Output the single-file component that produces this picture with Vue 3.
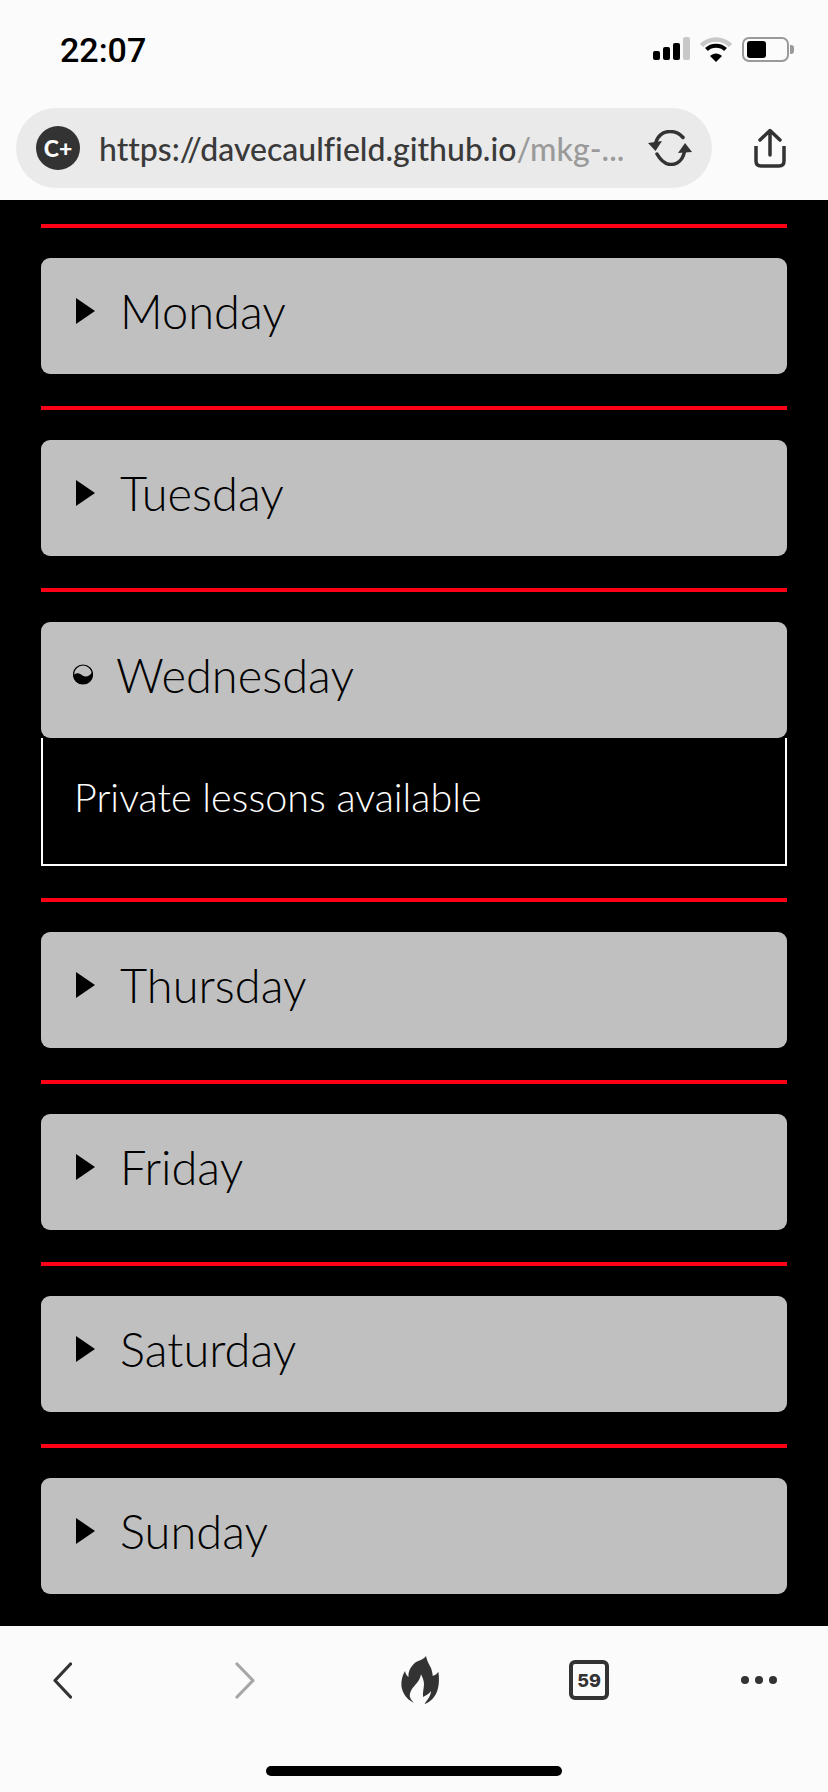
<script setup>
import { ref } from 'vue'

const days = ['Monday', 'Tuesday', 'Wednesday', 'Thursday', 'Friday', 'Saturday', 'Sunday']
const openDay = ref('Wednesday')

const toggle = (day) => {
  openDay.value = openDay.value === day ? '' : day
}
</script>

<template>
  <div class="page">
    <div class="status">
      <span class="time">22:07</span>
      <div class="status-icons">
        <div class="signal">
          <i class="b1"></i><i class="b2"></i><i class="b3"></i><i class="b4"></i>
        </div>
        <svg class="wifi" width="32" height="25" viewBox="0 0 32 25">
          <path d="M1.5 8.5C9.5 .5 22.5 .5 30.5 8.5" fill="none" stroke="#c8c8c8" stroke-width="4.5" />
          <path d="M6.5 12.5C11.5 7.5 20.5 7.5 25.5 12.5" fill="none" stroke="#000" stroke-width="4" />
          <path d="M16 25L10 19C13.5 15.5 18.5 15.5 22 19Z" fill="#000" />
        </svg>
        <div class="battery"><div class="battery-fill"></div></div>
        <div class="battery-cap"></div>
      </div>
    </div>

    <div class="toolbar">
      <div class="url-pill">
        <span class="site-badge">C+</span>
        <span class="url"><span class="url-host">https://davecaulfield.github.io</span><span class="url-path">/mkg-...</span></span>
        <svg class="sync" width="44" height="36" viewBox="0 0 44 36">
          <path d="M7 17C8 6 15 1.5 22 1.5C28 1.5 32 4 35 7.500" fill="none" stroke="#333" stroke-width="3.500" stroke-linecap="round" />
          <path d="M9 24C13 31 17 34.500 23 34.500C31 34.500 36 28 37 18" fill="none" stroke="#333" stroke-width="3.500" stroke-linecap="round" />
          <path d="M0 13L14 11L7.500 21Z" fill="#333" />
          <path d="M30 23L37 13L44 22Z" fill="#333" />
        </svg>
      </div>
      <svg class="share" width="32" height="40" viewBox="0 0 32 40">
        <path d="M2 18V33Q2 38 7 38H25Q30 38 30 33V18" fill="none" stroke="#333" stroke-width="3.500" />
        <path d="M16 27V3M6 12L16 2.500L26 12" fill="none" stroke="#333" stroke-width="3.500" stroke-linecap="round" stroke-linejoin="round" />
      </svg>
    </div>

    <main class="schedule">
      <section v-for="day in days" :key="day" class="day">
        <hr class="rule" />
        <div class="day-head" @click="toggle(day)">
          <svg v-if="openDay === day" class="marker-open" width="20" height="21" viewBox="0 0 20 21">
            <circle cx="10" cy="10.500" r="9.500" fill="#c0c0c0" stroke="#000" stroke-width="1.200" />
            <path d="M.5 11C4 8 7 9 9.500 11.500C13 14 17 12 19.500 7.500C20.800 15 16 20 10 20C4.500 20 .5 16 .5 11Z" fill="#000" />
          </svg>
          <svg v-else class="marker" width="19" height="26" viewBox="0 0 19 26">
            <path d="M0 0L19 13L0 26Z" fill="#000" />
          </svg>
          <span class="day-name">{{ day }}</span>
        </div>
        <div v-if="openDay === day" class="day-body">Private lessons available</div>
      </section>
    </main>

    <nav class="bottom-bar">
      <div class="bottom-icons">
        <svg width="19" height="37" viewBox="0 0 19 37">
          <path d="M17.500 2L2 18.500L17.500 35" fill="none" stroke="#333" stroke-width="3.200" stroke-linecap="round" stroke-linejoin="round" />
        </svg>
        <svg width="20" height="37" viewBox="0 0 20 37">
          <path d="M2 2L18 18.500L2 35" fill="none" stroke="#a6a6a6" stroke-width="3.200" stroke-linecap="round" stroke-linejoin="round" />
        </svg>
        <svg width="40" height="50" viewBox="0 0 40 50">
          <path d="M26 1C27 6 29 9 31 13C32 16 32.700 19 32.700 21C35 20 37 19 38.300 16.700C39.800 25 39 36 34 42C32 45 28 48 24.500 49C27 45 31 41 31 36C29 39 26 40 23 42C22.500 37 24 33 24 29C24 25 22 22 21 19.300C20 25 17 28 13.500 32C10.500 35.500 9 40 10.300 43C11 45 13 47 14.300 47.700C9 46 4 41 2 34C.5 28 2 21 5 16C5.500 19 7 21 8.500 22C8 16 11 11 16 7C20 5 24 4 26 1Z" fill="#333" />
        </svg>
        <span class="tabs">59</span>
        <div class="more"><i></i><i></i><i></i></div>
      </div>
      <div class="home-bar"></div>
    </nav>
  </div>
</template>

<style>
html,
body {
  margin: 0;
  background: #fbfbfb;
}
</style>

<style scoped>
.page {
  width: 828px;
  height: 1792px;
  display: flex;
  flex-direction: column;
  overflow: hidden;
  background: #fbfbfb;
  font-family: "Lato", "Liberation Sans", sans-serif;
}

.status {
  height: 108px;
  box-sizing: border-box;
  padding: 30px 34px 0 60px;
  display: flex;
  justify-content: space-between;
  align-items: flex-start;
}

.time {
  font-family: "Roboto", "Liberation Sans", sans-serif;
  font-size: 34px;
  line-height: 40px;
  font-weight: 500;
  color: #000;
}

.status-icons {
  display: flex;
  align-items: flex-start;
  margin-top: 7px;
}

.signal {
  display: flex;
  align-items: flex-end;
  gap: 3px;
  height: 23px;
  margin-right: 10px;
}

.signal i {
  width: 7px;
  background: #000;
  border-radius: 2px;
}

.signal .b1 {
  height: 9px;
}

.signal .b2 {
  height: 13px;
}

.signal .b3 {
  height: 17px;
}

.signal .b4 {
  height: 23px;
  background: #c8c8c8;
}

.wifi {
  margin-right: 10px;
}

.battery {
  width: 47px;
  height: 25px;
  box-sizing: border-box;
  border: 2px solid #9a9a9a;
  border-radius: 7px;
  padding: 2px 3px;
}

.battery-fill {
  width: 19px;
  height: 17px;
  background: #000;
  border-radius: 3px;
}

.battery-cap {
  width: 4px;
  height: 9px;
  margin: 8px 0 0 1px;
  background: #9a9a9a;
  border-radius: 0 3px 3px 0;
}

.toolbar {
  height: 92px;
  box-sizing: border-box;
  padding-left: 16px;
  display: flex;
  align-items: flex-start;
}

.url-pill {
  width: 696px;
  height: 80px;
  box-sizing: border-box;
  padding: 0 20px;
  border-radius: 40px;
  background: #eaeaea;
  display: flex;
  align-items: center;
}

.site-badge {
  width: 44px;
  height: 44px;
  border-radius: 50%;
  background: #333;
  color: #fafafa;
  font-size: 23px;
  font-weight: 900;
  display: flex;
  align-items: center;
  justify-content: center;
}

.url {
  margin-left: 19px;
  flex: 1;
  min-width: 0;
  font-size: 32px;
  font-weight: 500;
  font-variant-ligatures: none;
  white-space: nowrap;
  color: #3a3a3a;
}

.url-path {
  color: #9a9a9a;
}

.sync {
  flex: none;
}

.share {
  margin: 20px 0 0 42px;
}

.schedule {
  flex: 1;
  background: #000;
  padding: 24px 41px 0;
}

.rule {
  height: 4px;
  margin: 0;
  border: 0;
  background: #ff0016;
}

.day {
  padding-bottom: 32px;
}

.day-head {
  height: 116px;
  margin-top: 30px;
  box-sizing: border-box;
  padding-left: 35px;
  border-radius: 9px;
  background: #c0c0c0;
  display: flex;
  align-items: center;
  color: #000;
  cursor: pointer;
}

.marker {
  margin-top: -10px;
}

.marker-open {
  margin: -12px -2px 0 -3px;
}

.day-name {
  margin: -10px 0 0 25px;
  font-size: 47px;
  font-weight: 300;
  line-height: 54px;
}

.day-body {
  height: 128px;
  box-sizing: border-box;
  border: 2px solid #fff;
  border-top: 0;
  padding: 36px 31px 0;
  color: #fff;
  font-size: 39.5px;
  font-weight: 300;
  line-height: 46px;
}

.bottom-bar {
  height: 166px;
  box-sizing: border-box;
  padding-top: 29px;
  display: flex;
  flex-direction: column;
}

.bottom-icons {
  height: 50px;
  padding-left: 53px;
  display: grid;
  grid-template-columns: 182px 165px 169px 172px auto;
  align-items: center;
  justify-items: start;
}

.tabs {
  width: 40px;
  height: 40px;
  box-sizing: border-box;
  border: 4px solid #333;
  border-radius: 6px;
  color: #333;
  font-family: "Inter", "Liberation Sans", sans-serif;
  font-size: 18px;
  font-weight: 800;
  display: flex;
  align-items: center;
  justify-content: center;
}

.more {
  display: flex;
  gap: 6px;
}

.more i {
  width: 8px;
  height: 8px;
  border-radius: 50%;
  background: #333;
}

.home-bar {
  width: 296px;
  height: 10px;
  margin: 61px auto 0;
  border-radius: 5px;
  background: #000;
}
</style>
